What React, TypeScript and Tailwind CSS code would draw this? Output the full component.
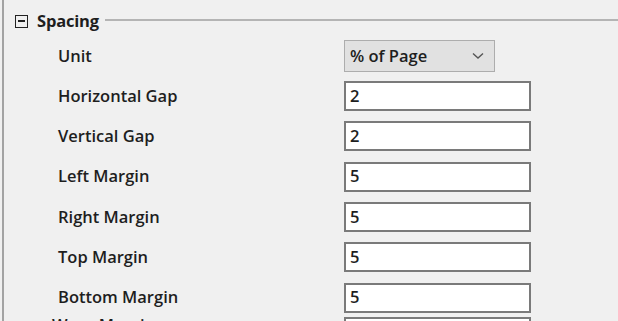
import React from "react";

const rows = [
  { label: "Horizontal Gap", value: "2" },
  { label: "Vertical Gap", value: "2" },
  { label: "Left Margin", value: "5" },
  { label: "Right Margin", value: "5" },
  { label: "Top Margin", value: "5" },
  { label: "Bottom Margin", value: "5" },
];

export default function App() {
  return (
    <div
      className="w-[618px] h-[321px] overflow-hidden bg-[#f0f0f0] text-[#1e1e1e]"
      style={{ fontFamily: '"Open Sans", "Noto Sans", sans-serif' }}
    >
      <div className="ml-[2px] h-full border-l-2 border-[#a3a3a3] flex flex-col">
        <div className="flex items-center h-[36px] shrink-0 pt-[6px] pl-[11px]">
          <div className="w-[13px] h-[13px] border-[1.5px] border-[#222] flex items-center justify-center">
            <div className="w-[7px] h-[1.5px] bg-[#222]" />
          </div>
          <span className="ml-[9px] text-[16.5px] font-bold leading-none tracking-[-0.2px]">Spacing</span>
          <div className="ml-[6px] mt-[-3px] flex-1 h-[2px] bg-[#b4b4b4]" />
        </div>
        <div className="flex items-center h-[40px] shrink-0">
          <span className="w-[340px] pl-[54px] text-[16.5px] font-semibold">Unit</span>
          <div className="w-[151px] h-[32px] border border-[#adadad] bg-[#e1e1e1] flex items-center justify-between pl-[5px] pr-[10px]">
            <span className="text-[16.5px] font-semibold">% of Page</span>
            <svg width="12" height="8" viewBox="0 0 12 8" fill="none">
              <path d="M1 1.5 L6 6 L11 1.5" stroke="#555" strokeWidth="1.4" />
            </svg>
          </div>
        </div>
        {rows.map((r) => (
          <div key={r.label} className="flex items-center h-[40.3px] shrink-0">
            <span className="w-[340px] pl-[54px] text-[16.5px] font-semibold">{r.label}</span>
            <div className="w-[187px] h-[30px] border-2 border-[#7a7a7a] bg-white flex items-center pl-[4px]">
              <span className="text-[16.5px] font-semibold">{r.value}</span>
            </div>
          </div>
        ))}
        <div className="flex items-start shrink-0 mt-[-1px]">
          <span className="w-[340px] pl-[48px] text-[16.5px] font-semibold leading-none">Wrap Margin</span>
          <div className="w-[187px] h-[30px] border-2 border-[#7a7a7a] bg-white" />
        </div>
      </div>
    </div>
  );
}
